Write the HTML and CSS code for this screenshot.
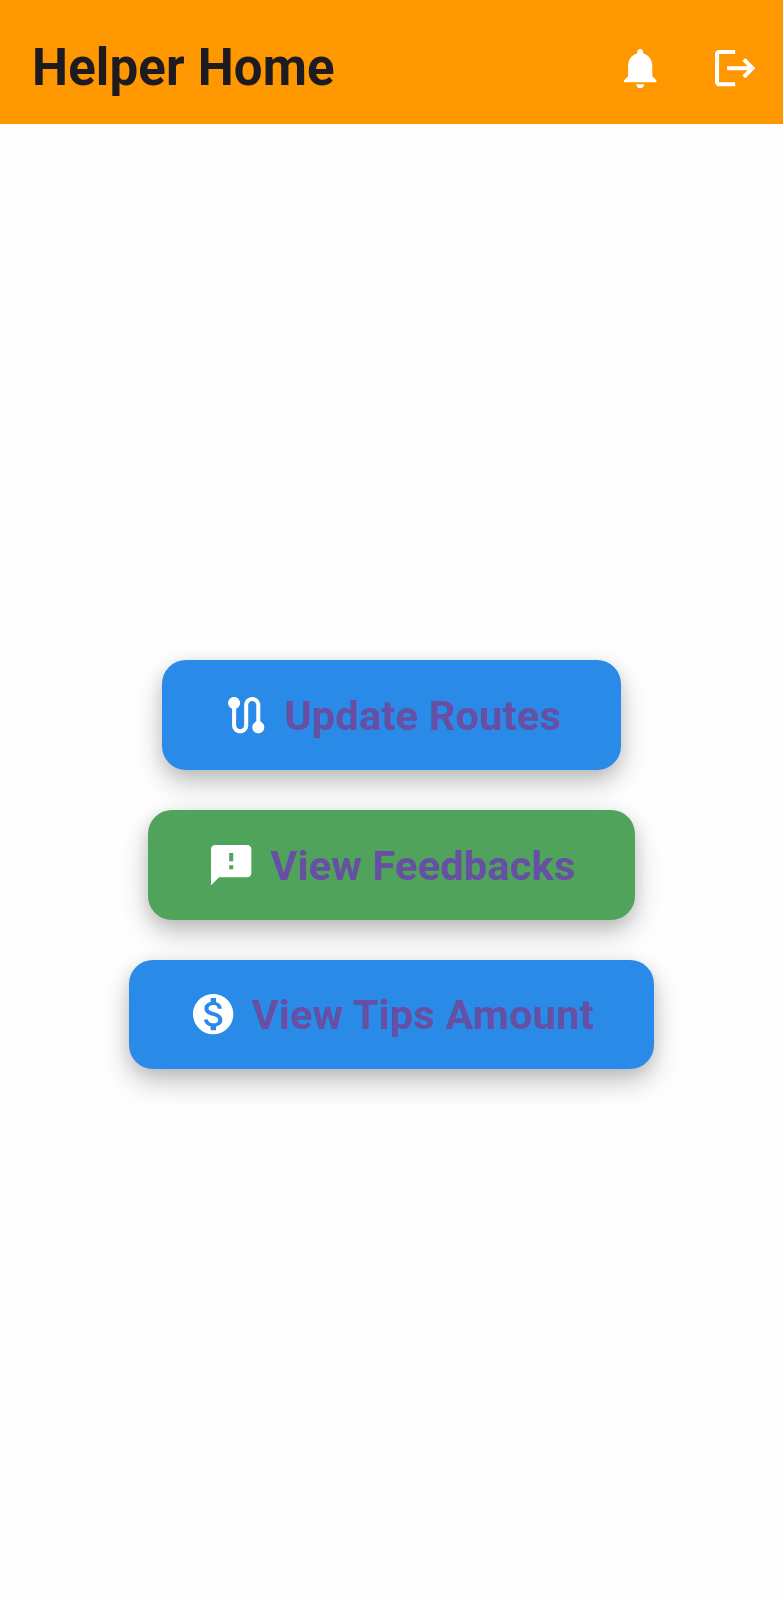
FILE: index.html
```html
<!DOCTYPE html>
<html lang="en">
<head>
<meta charset="utf-8">
<title>Helper Home</title>
<link rel="stylesheet" href="styles.css">
</head>
<body>
<header class="app-bar">
  <h1 class="title">Helper Home</h1>
  <div class="actions">
    <svg class="icon" viewBox="0 0 24 24"><path d="M12 22c1.1 0 2-.9 2-2h-4c0 1.1.89 2 2 2zm6-6v-5c0-3.07-1.64-5.64-4.5-6.32V4c0-.83-.67-1.5-1.5-1.5s-1.5.67-1.5 1.5v.68C7.63 5.36 6 7.92 6 11v5l-2 2v1h16v-1l-2-2z"/></svg>
    <svg class="icon" viewBox="0 0 24 24"><path d="M17 7l-1.41 1.41L18.17 11H8v2h10.17l-2.58 2.58L17 17l5-5zM4 5h8V3H4c-1.1 0-2 .9-2 2v14c0 1.1.9 2 2 2h8v-2H4V5z"/></svg>
  </div>
</header>
<main class="menu">
  <button class="button button-blue">
    <svg class="icon" viewBox="0 0 24 24"><path d="M19 15.18V7c0-2.21-1.79-4-4-4s-4 1.79-4 4v10c0 1.1-.9 2-2 2s-2-.9-2-2V8.82C8.16 8.4 9 7.3 9 6c0-1.66-1.34-3-3-3S3 4.34 3 6c0 1.3.84 2.4 2 2.82V17c0 2.21 1.79 4 4 4s4-1.79 4-4V7c0-1.1.9-2 2-2s2 .9 2 2v8.18c-1.16.41-2 1.51-2 2.82 0 1.66 1.34 3 3 3s3-1.34 3-3c0-1.3-.84-2.4-2-2.82z"/></svg>
    <span class="label">Update Routes</span>
  </button>
  <button class="button button-green">
    <svg class="icon" viewBox="0 0 24 24"><path d="M20 2H4c-1.1 0-1.99.9-1.99 2L2 22l4-4h14c1.1 0 2-.9 2-2V4c0-1.1-.9-2-2-2zm-7 12h-2v-2h2v2zm0-4h-2V6h2v4z"/></svg>
    <span class="label">View Feedbacks</span>
  </button>
  <button class="button button-blue">
    <svg class="icon" viewBox="0 0 24 24"><path d="M12 2C6.48 2 2 6.48 2 12s4.48 10 10 10 10-4.48 10-10S17.52 2 12 2zm1.41 16.09V20h-2.67v-1.93c-1.71-.36-3.16-1.46-3.27-3.4h1.96c.1 1.05.82 1.87 2.65 1.87 1.96 0 2.4-.98 2.4-1.59 0-.83-.44-1.61-2.67-2.14-2.48-.6-4.18-1.62-4.18-3.67 0-1.72 1.39-2.84 3.11-3.21V4h2.67v1.95c1.86.45 2.79 1.86 2.85 3.39H14.3c-.05-1.11-.64-1.87-2.22-1.87-1.5 0-2.4.68-2.4 1.64 0 .84.65 1.39 2.67 1.91s4.18 1.39 4.18 3.91c-.01 1.83-1.38 2.83-3.12 3.16z"/></svg>
    <span class="label">View Tips Amount</span>
  </button>
</main>
</body>
</html>
```
FILE: styles.css
```css
* { box-sizing: border-box; }

body {
  margin: 0;
  height: 1600px;
  display: flex;
  flex-direction: column;
  background: #fefefe;
  font-family: Roboto, sans-serif;
}

.app-bar {
  height: 124px;
  flex: none;
  display: flex;
  align-items: center;
  justify-content: space-between;
  padding: 12px 23.5px 0 32px;
  background: #ff9800;
}

.title {
  margin: 0;
  font-size: 51px;
  font-weight: 700;
  line-height: 60px;
  letter-spacing: .15px;
  color: #1d1b20;
}

.actions { display: flex; gap: 47px; }

.icon {
  width: 48.4px;
  height: 48.4px;
  flex: none;
  fill: #fff;
}

.menu {
  flex: 1;
  display: flex;
  flex-direction: column;
  align-items: center;
  gap: 40px;
  padding-top: 536px;
}

.button {
  height: 109.8px;
  display: flex;
  align-items: center;
  gap: 14.6px;
  padding: 0 60px 0 59.7px;
  border: 0;
  border-radius: 24px;
  font: 700 41.5px/50px Roboto, sans-serif;
  letter-spacing: .2px;
  color: #6750a4;
  box-shadow: 0 13px 28px rgba(0, 0, 0, .22), 0 4px 16px rgba(0, 0, 0, .1);
}

.button-blue { background: #2a8ae8; }
.button-green { background: #50a35b; }

.label {
  padding-top: 2px;
  white-space: nowrap;
}
```
